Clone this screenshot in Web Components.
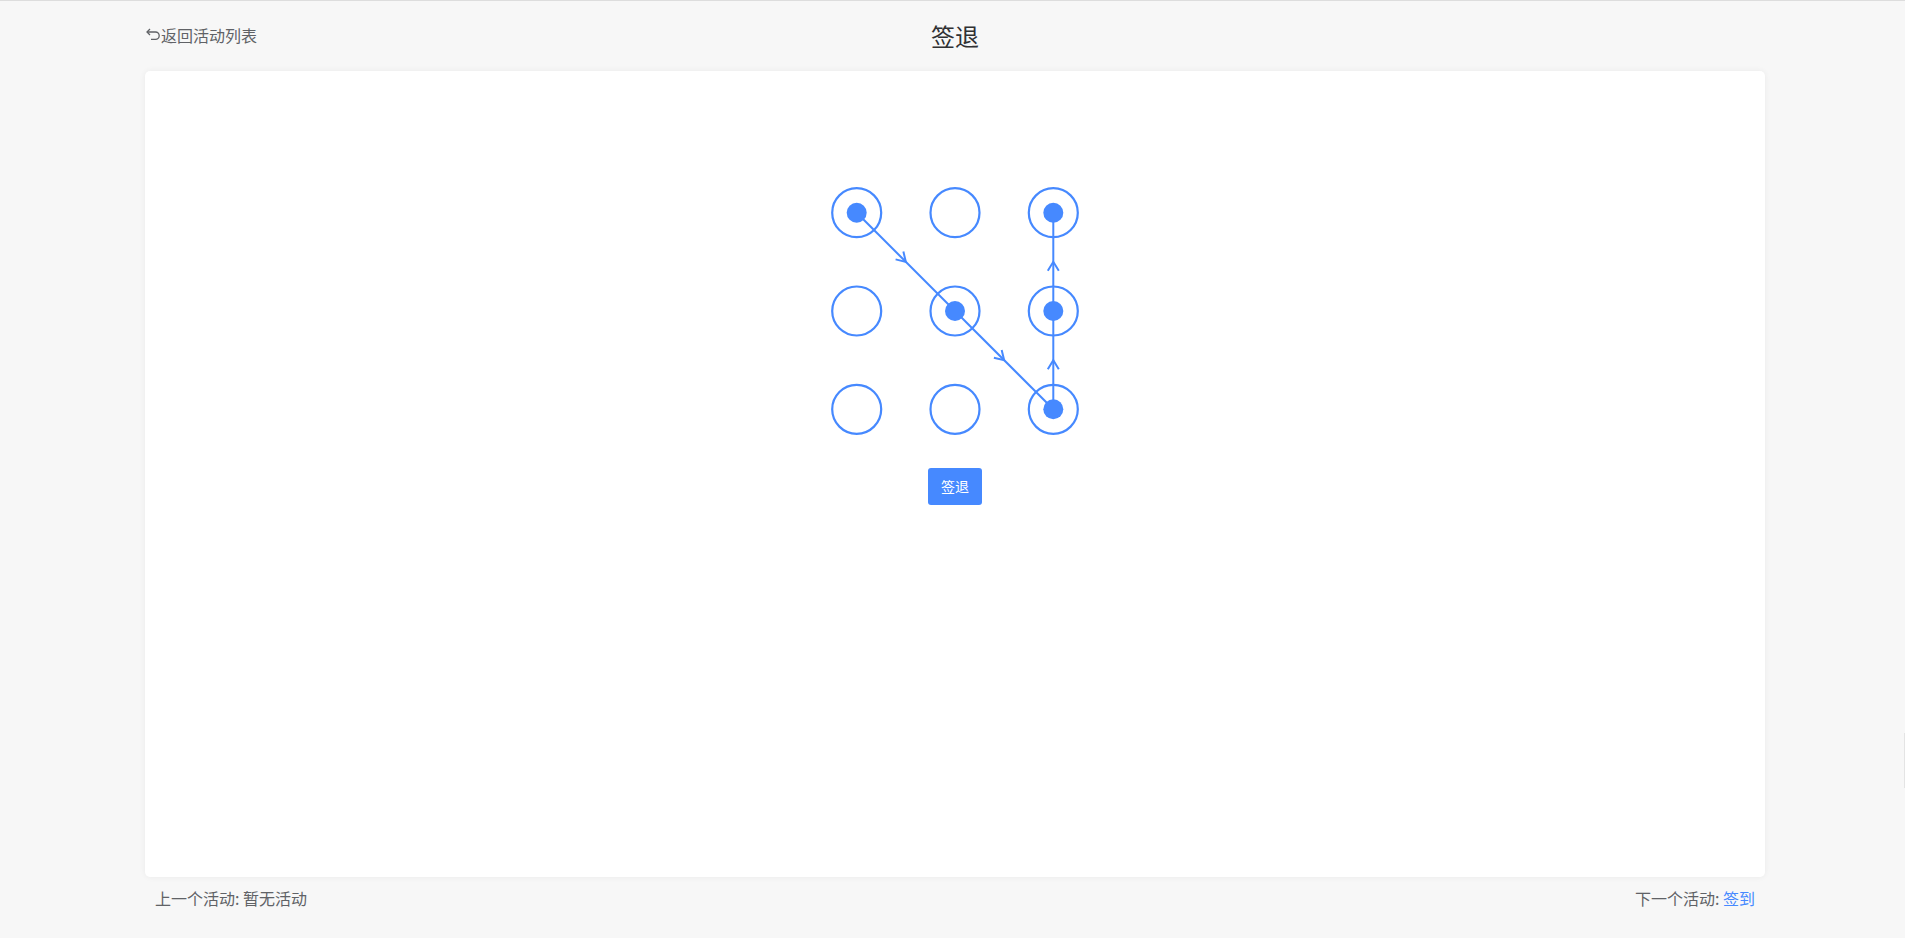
<!DOCTYPE html>
<html lang="zh">
<head>
<meta charset="utf-8">
<title>签退</title>
<style>
    html, body {
        margin: 0;
        padding: 0;
        height: 100%;
        background: #f7f7f7;
        font-family: "Noto Sans CJK SC", "Liberation Sans", sans-serif;
        overflow: hidden;
    }
    activity-footer a { color: #4689ff; }
</style>
</head>
<body>
<activity-page>
    <activity-header slot="header" back="返回活动列表" title="签退"></activity-header>
    <gesture-pad pattern="0,4,8,5,2"></gesture-pad>
    <action-button>签退</action-button>
    <activity-footer slot="footer">
        <span slot="prev">上一个活动: 暂无活动</span>
        <span slot="next">下一个活动: <a>签到</a></span>
    </activity-footer>
</activity-page>

<script>
class ActivityPage extends HTMLElement {
    constructor() {
        super();
        this.attachShadow({ mode: "open" });
        this.shadowRoot.innerHTML = `
            <style>
                :host {
                    display: block;
                    height: 938px;
                    box-sizing: border-box;
                    border-top: 1px solid #dddddd;
                    padding: 0 140px 0 145px;
                    position: relative;
                }
                .card {
                    display: flex;
                    flex-direction: column;
                    align-items: center;
                    height: 806px;
                    background: #fff;
                    border-radius: 5px;
                    box-shadow: 0 0 6px rgba(0, 0, 0, 0.06);
                    padding-top: 102px;
                    box-sizing: border-box;
                }
                .edge {
                    position: absolute;
                    right: 0;
                    top: 732px;
                    width: 1px;
                    height: 55px;
                    background: #e4e4e4;
                }
            </style>
            <slot name="header"></slot>
            <div class="card"><slot></slot></div>
            <slot name="footer"></slot>
            <div class="edge"></div>
        `;
    }
}

class ActivityHeader extends HTMLElement {
    constructor() {
        super();
        this.attachShadow({ mode: "open" });
        const back = this.getAttribute("back") || "";
        const title = this.getAttribute("title") || "";
        this.shadowRoot.innerHTML = `
            <style>
                :host {
                    display: grid;
                    grid-template-columns: 1fr auto 1fr;
                    align-items: center;
                    height: 70px;
                }
                a {
                    display: flex;
                    align-items: center;
                    color: #606266;
                    font-size: 16px;
                    line-height: 24px;
                    margin-top: -2px;
                }
                svg {
                    width: 16px;
                    height: 16px;
                    flex: none;
                }
                h1 {
                    margin: 0;
                    font-size: 24px;
                    font-weight: 400;
                    color: #303133;
                    line-height: 32px;
                }
            </style>
            <a>
                <svg viewBox="0 0 16 16" fill="none" stroke="#606266" stroke-width="1.3">
                    <path d="M5 2 L2 5 L5 8"/>
                    <path d="M2 5 H10.5 A3.7 3.7 0 0 1 10.5 12.4 H6"/>
                </svg>${back}
            </a>
            <h1>${title}</h1>
            <span></span>
        `;
    }
}

class GesturePad extends HTMLElement {
    constructor() {
        super();
        this.attachShadow({ mode: "open" });
        const order = (this.getAttribute("pattern") || "").split(",").map(Number);
        const xs = [39.7, 138, 236.3];
        const pt = i => [xs[i % 3], xs[Math.floor(i / 3)]];

        // Rings first, then the lines over them, dots last
        let rings = "";
        for (let i = 0; i < 9; i++) {
            const [x, y] = pt(i);
            rings += `<circle cx="${x}" cy="${y}" r="24.5" fill="none" stroke="#4689ff" stroke-width="2.2"/>`;
        }
        let lines = "";
        for (let i = 0; i < order.length - 1; i++) {
            const [x1, y1] = pt(order[i]);
            const [x2, y2] = pt(order[i + 1]);
            const mx = (x1 + x2) / 2;
            const my = (y1 + y2) / 2;
            const angle = Math.atan2(y2 - y1, x2 - x1) * 180 / Math.PI;
            lines += `<line x1="${x1}" y1="${y1}" x2="${x2}" y2="${y2}" stroke="#4689ff" stroke-width="2"/>`;
            lines += `<path transform="translate(${mx} ${my}) rotate(${angle})" d="M-9 -5.5 L0 0 L-9 5.5" fill="none" stroke="#4689ff" stroke-width="2"/>`;
        }
        const dots = order.map(i => {
            const [x, y] = pt(i);
            return `<circle cx="${x}" cy="${y}" r="10" fill="#4689ff"/>`;
        }).join("");

        this.shadowRoot.innerHTML = `
            <style>
                :host {
                    display: block;
                    width: 277px;
                    height: 277px;
                }
                svg {
                    display: block;
                }
            </style>
            <svg width="277" height="277" viewBox="0 0 277 277">${rings}${lines}${dots}</svg>
        `;
    }
}

class ActionButton extends HTMLElement {
    constructor() {
        super();
        this.attachShadow({ mode: "open" });
        this.shadowRoot.innerHTML = `
            <style>
                :host {
                    display: block;
                    margin-top: 18px;
                }
                button {
                    display: block;
                    width: 54px;
                    height: 37px;
                    padding: 0 0 2px;
                    border: 0;
                    border-radius: 3px;
                    background: #4689ff;
                    color: #fff;
                    font: 14px "Noto Sans CJK SC", "Liberation Sans", sans-serif;
                }
            </style>
            <button><slot></slot></button>
        `;
    }
}

class ActivityFooter extends HTMLElement {
    constructor() {
        super();
        this.attachShadow({ mode: "open" });
        this.shadowRoot.innerHTML = `
            <style>
                :host {
                    display: flex;
                    justify-content: space-between;
                    padding: 0 10px;
                    height: 42px;
                    align-items: center;
                    color: #606266;
                    font-size: 16px;
                }
                ::slotted(*) {
                    color: #606266;
                }
            </style>
            <slot name="prev"></slot>
            <slot name="next"></slot>
        `;
    }
}

customElements.define("activity-page", ActivityPage);
customElements.define("activity-header", ActivityHeader);
customElements.define("gesture-pad", GesturePad);
customElements.define("action-button", ActionButton);
customElements.define("activity-footer", ActivityFooter);
</script>
</body>
</html>
